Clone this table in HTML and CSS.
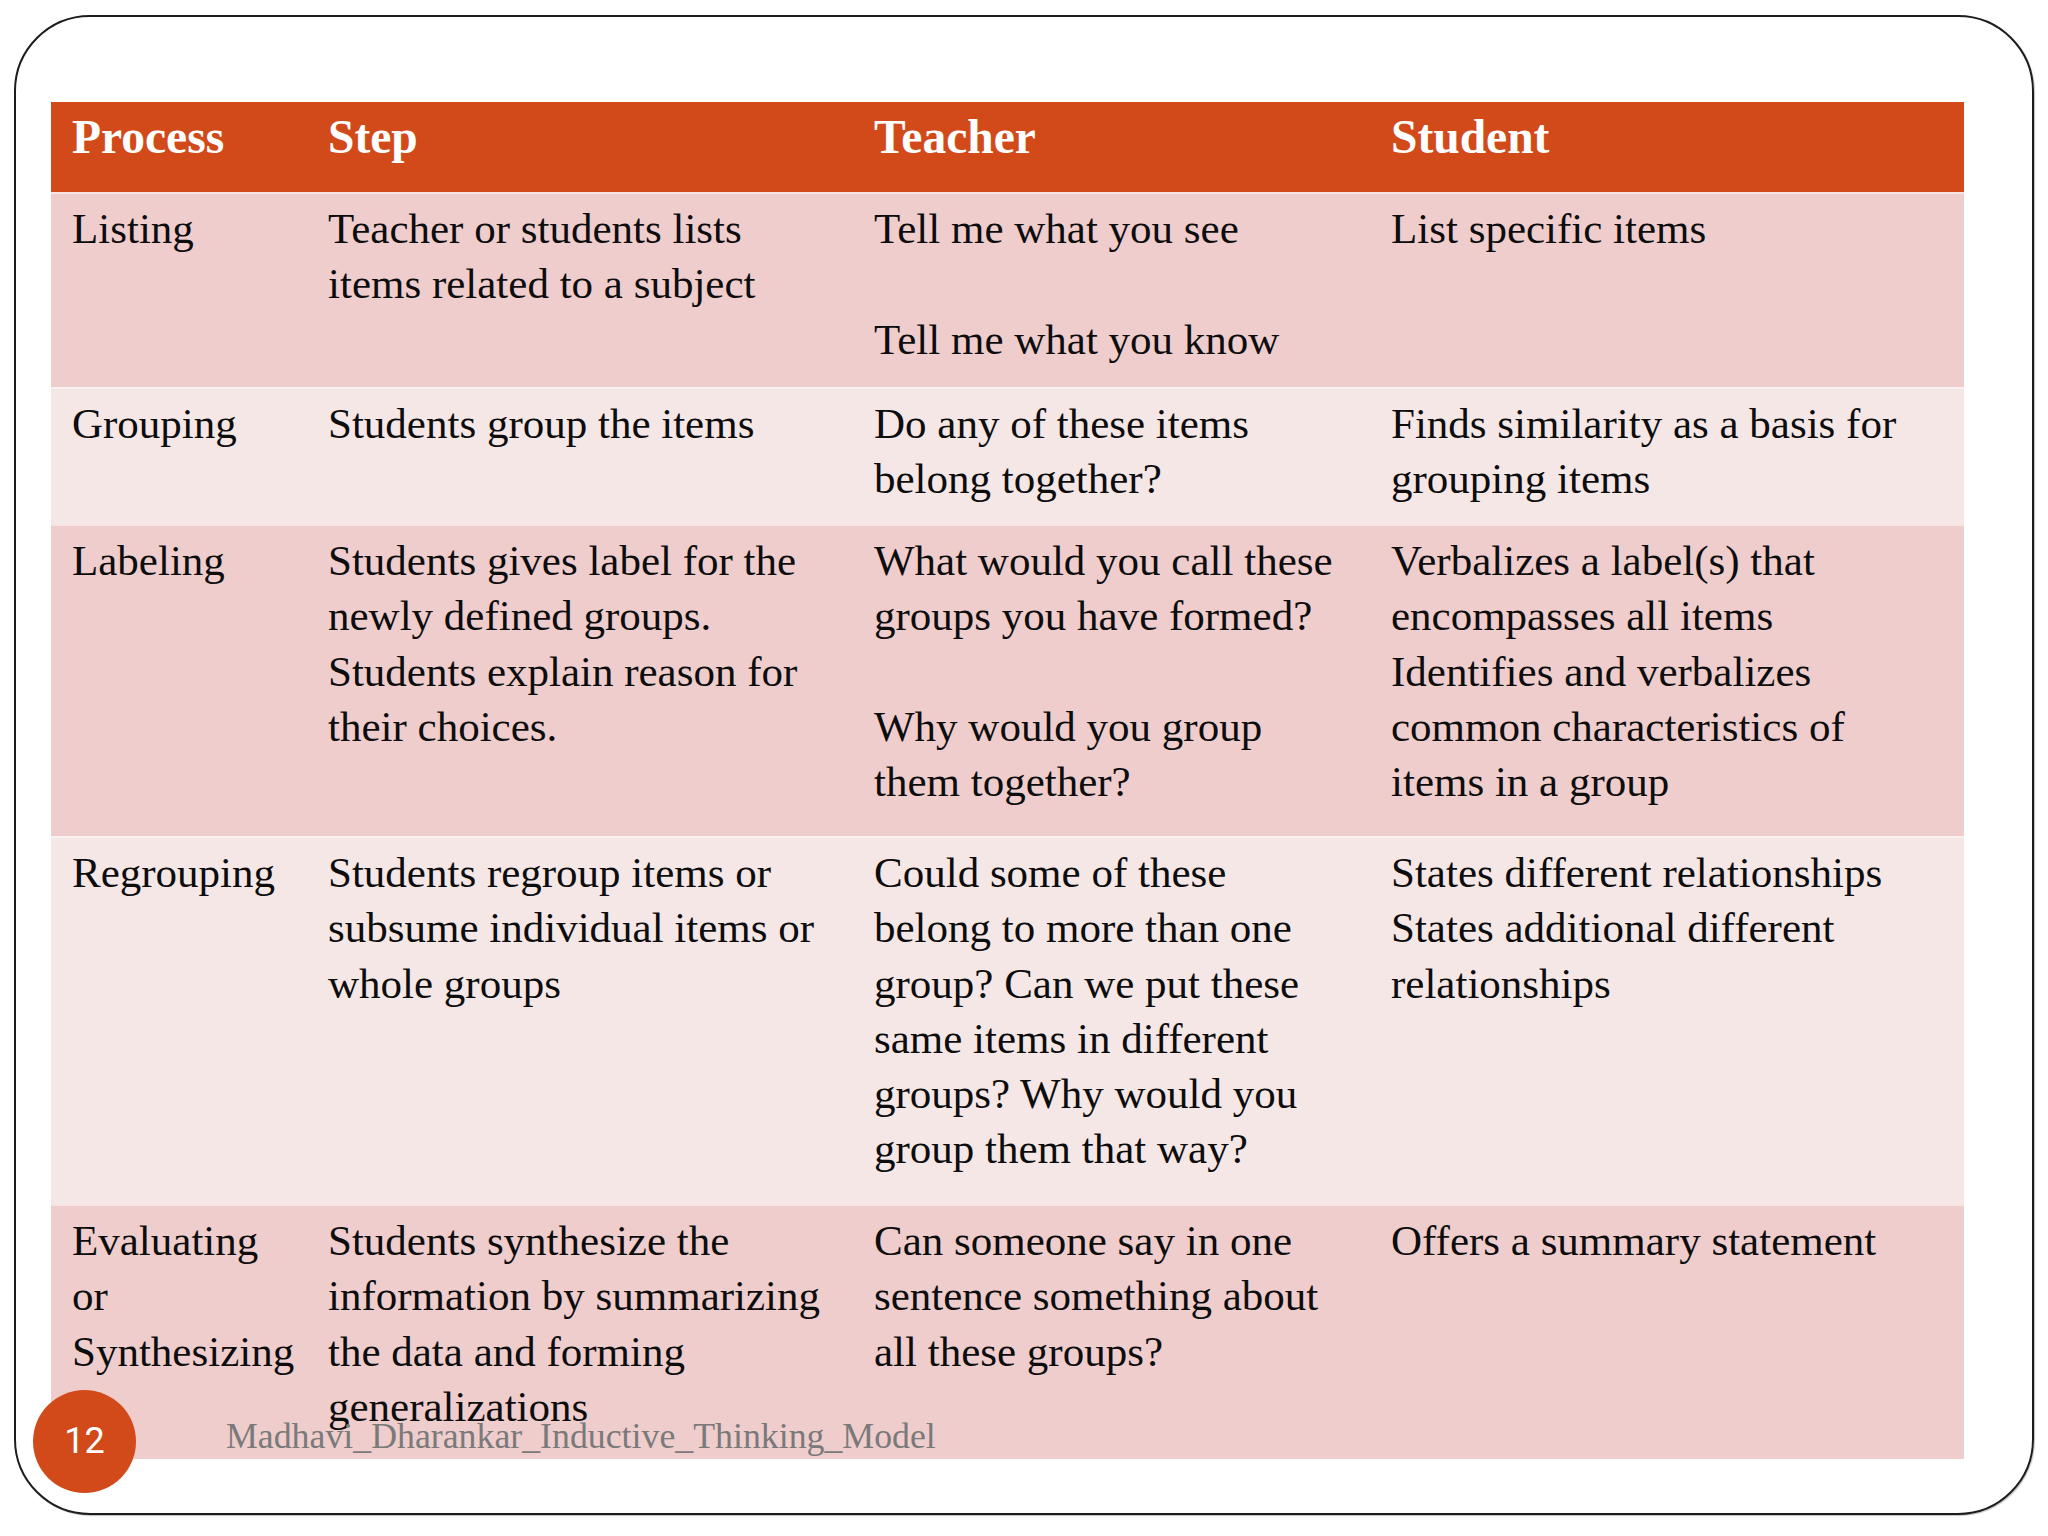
FILE: index.html
```html
<!DOCTYPE html>
<html lang="en">
<head>
<meta charset="utf-8">
<title>Inductive Thinking Model</title>
<link rel="stylesheet" href="styles.css">
</head>
<body>
<div class="slide">
  <table class="grid">
    <colgroup>
      <col class="c-process">
      <col class="c-step">
      <col class="c-teacher">
      <col class="c-student">
    </colgroup>
    <thead>
      <tr class="head">
        <th>Process</th>
        <th>Step</th>
        <th>Teacher</th>
        <th>Student</th>
      </tr>
    </thead>
    <tbody>
      <tr class="odd r1">
        <td>Listing</td>
        <td>Teacher or students lists<br>items related to a subject</td>
        <td>Tell me what you see<br><br>Tell me what you know</td>
        <td>List specific items</td>
      </tr>
      <tr class="even r2">
        <td>Grouping</td>
        <td>Students group the items</td>
        <td>Do any of these items<br>belong together?</td>
        <td>Finds similarity as a basis for<br>grouping items</td>
      </tr>
      <tr class="odd r3">
        <td>Labeling</td>
        <td>Students gives label for the<br>newly defined groups.<br>Students explain reason for<br>their choices.</td>
        <td>What would you call these<br>groups you have formed?<br><br>Why would you group<br>them together?</td>
        <td>Verbalizes a label(s) that<br>encompasses all items<br>Identifies and verbalizes<br>common characteristics of<br>items in a group</td>
      </tr>
      <tr class="even r4">
        <td>Regrouping</td>
        <td>Students regroup items or<br>subsume individual items or<br>whole groups</td>
        <td>Could some of these<br>belong to more than one<br>group? Can we put these<br>same items in different<br>groups? Why would you<br>group them that way?</td>
        <td>States different relationships<br>States additional different<br>relationships</td>
      </tr>
      <tr class="odd r5">
        <td>Evaluating<br>or<br>Synthesizing</td>
        <td>Students synthesize the<br>information by summarizing<br>the data and forming<br>generalizations</td>
        <td>Can someone say in one<br>sentence something about<br>all these groups?</td>
        <td>Offers a summary statement</td>
      </tr>
    </tbody>
  </table>
  <div class="badge">12</div>
  <div class="footer">Madhavi_Dharankar_Inductive_Thinking_Model</div>
</div>
</body>
</html>
```
FILE: styles.css
```css
html, body {
  margin: 0;
  padding: 0;
  background: #ffffff;
}

body {
  width: 2048px;
  height: 1536px;
  overflow: hidden;
  font-family: "Liberation Serif", "Times New Roman", serif;
  color: #0d0d0d;
}

.slide {
  position: relative;
  box-sizing: border-box;
  margin: 15px 0 0 14px;
  width: 2020px;
  height: 1500px;
  border: 2px solid #1c1c1c;
  border-radius: 76px;
  box-shadow: 1px 1px 1px rgba(0, 0, 0, 0.25);
  padding: 85px 0 0 35px;
}

.grid {
  border-collapse: separate;
  border-spacing: 0;
  table-layout: fixed;
  width: 1913px;
}

.c-process { width: 256px; }
.c-step { width: 546px; }
.c-teacher { width: 517px; }
.c-student { width: 594px; }

.grid th,
.grid td {
  text-align: left;
  vertical-align: top;
  white-space: nowrap;
  padding: 9px 0 0 21px;
}

.head th {
  height: 90px;
  box-sizing: border-box;
  padding-top: 8px;
  background: #d24a1a;
  color: #ffffff;
  font-weight: bold;
  font-size: 47.5px;
  line-height: 55px;
}

.grid td {
  font-size: 43px;
  line-height: 55.3px;
  box-shadow: inset 0 2px 0 rgba(255, 255, 255, 0.45);
}

.odd td { background: #efcdcd; }
.even td { background: #f6e7e7; }

.r1 { height: 195px; }
.r2 { height: 137px; }
.r3 { height: 312px; }
.r4 { height: 368px; }
.r5 { height: 255px; }

.badge {
  position: absolute;
  left: 17px;
  top: 1373px;
  width: 103px;
  height: 103px;
  border-radius: 50%;
  background: #d24a1a;
  color: #ffffff;
  font-family: Roboto, "Liberation Sans", sans-serif;
  font-size: 36px;
  line-height: 103px;
  text-align: center;
}

.footer {
  position: absolute;
  left: 210px;
  top: 1399px;
  font-size: 35.8px;
  line-height: 40px;
  color: #7a7a7a;
  white-space: nowrap;
}
```
